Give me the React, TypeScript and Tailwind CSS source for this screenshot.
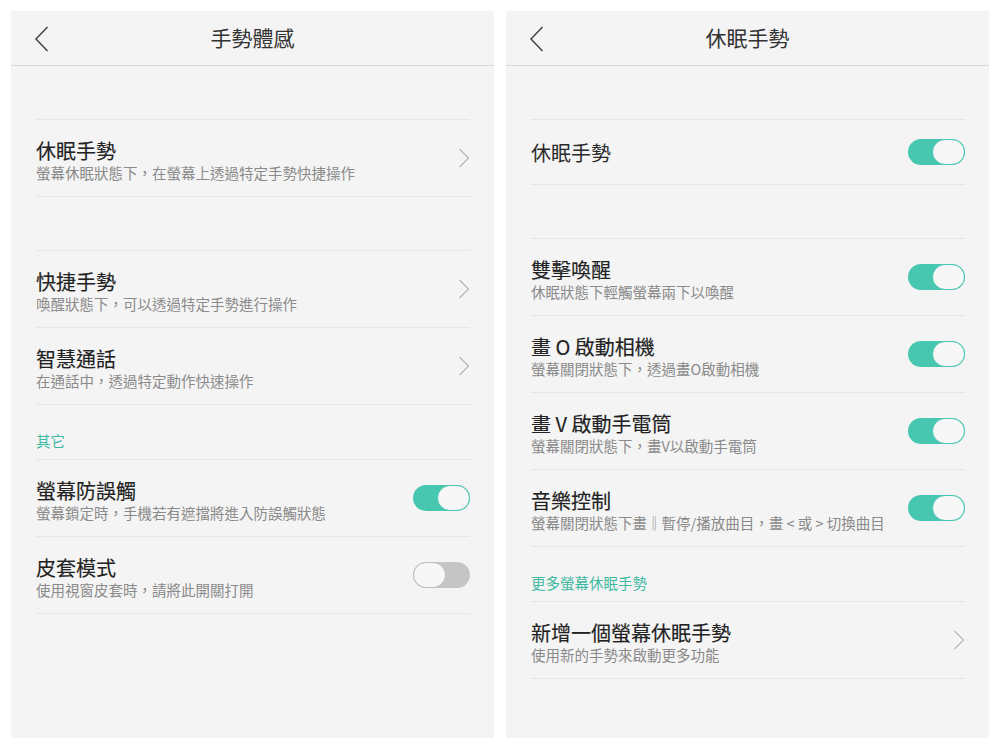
import { ReactNode } from 'react'

type Item = {
  title: string
  sub?: string
  control: 'chevron' | 'on' | 'off'
}

const Chevron = () => (
  <svg width="12" height="20" viewBox="0 0 12 20" fill="none" className="shrink-0">
    <path d="M1.5 1 L10.5 10 L1.5 19" stroke="#b8b8b8" strokeWidth="1.3" />
  </svg>
)

const BackArrow = () => (
  <svg width="16" height="26" viewBox="0 0 16 26" fill="none">
    <path d="M13.5 1 L2 13 L13.5 25" stroke="#444444" strokeWidth="1.5" />
  </svg>
)

const Toggle = ({ on }: { on: boolean }) =>
  on ? (
    <div className="flex h-[26px] w-[57px] shrink-0 justify-end rounded-full bg-[#48c7b0]">
      <div className="h-[26px] w-[33px] rounded-full border-[1.5px] border-[#48c7b0] bg-[#f7f7f7]" />
    </div>
  ) : (
    <div className="flex h-[26px] w-[57px] shrink-0 justify-start rounded-full bg-[#c5c5c5]">
      <div className="h-[26px] w-[33px] rounded-full border-[1.5px] border-[#bdbdbd] bg-[#f7f7f7]" />
    </div>
  )

const Row = ({ item }: { item: Item }) => (
  <div className="flex h-[77px] items-center justify-between border-b border-[#e6e6e6]">
    <div className="flex flex-col pt-[6px]">
      <span className="text-[20px] leading-[24px] text-[#222222] [-webkit-text-stroke:0.15px_#222222]">{item.title}</span>
      {item.sub && <span className="text-[14.5px] leading-[20px] text-[#8a8a8a]">{item.sub}</span>}
    </div>
    {item.control === 'chevron' ? <Chevron /> : <Toggle on={item.control === 'on'} />}
  </div>
)

const Group = ({ items }: { items: Item[] }) => (
  <div className="border-t border-[#e6e6e6]">
    {items.map((item) => (
      <Row key={item.title} item={item} />
    ))}
  </div>
)

const SectionLabel = ({ children }: { children: ReactNode }) => (
  <div className="flex h-[54px] items-end pb-[8px] text-[14.5px] leading-[20px] text-[#3fb9a2]">{children}</div>
)

const Spacer = () => <div className="h-[53px]" />

const Panel = ({ title, children }: { title: string; children: ReactNode }) => (
  <div className="flex h-[727px] w-[483px] flex-col bg-[#f4f4f4]">
    <div className="grid h-[55px] grid-cols-[80px_1fr_80px] items-center border-b border-[#d9d9d9]">
      <div className="pl-[23px] pt-[1px]">
        <BackArrow />
      </div>
      <div className="text-center text-[21px] text-[#333333]">{title}</div>
      <div />
    </div>
    <div className="pl-[25px] pr-[24px]">{children}</div>
  </div>
)

const App = () => {
  return (
    <div className="flex h-[750px] w-[1000px] gap-[12px] bg-white pl-[11px] pt-[11px] font-['Noto_Sans_CJK_TC','Noto_Sans',sans-serif]">
      <Panel title="手勢體感">
        <Spacer />
        <Group items={[{ title: '休眠手勢', sub: '螢幕休眠狀態下，在螢幕上透過特定手勢快捷操作', control: 'chevron' }]} />
        <Spacer />
        <Group
          items={[
            { title: '快捷手勢', sub: '喚醒狀態下，可以透過特定手勢進行操作', control: 'chevron' },
            { title: '智慧通話', sub: '在通話中，透過特定動作快速操作', control: 'chevron' },
          ]}
        />
        <div className="border-b border-[#e6e6e6]">
          <SectionLabel>其它</SectionLabel>
        </div>
        <Row item={{ title: '螢幕防誤觸', sub: '螢幕鎖定時，手機若有遮擋將進入防誤觸狀態', control: 'on' }} />
        <Row item={{ title: '皮套模式', sub: '使用視窗皮套時，請將此開關打開', control: 'off' }} />
      </Panel>

      <Panel title="休眠手勢">
        <Spacer />
        <div className="flex h-[66px] items-center justify-between border-y border-[#e6e6e6]">
          <span className="pt-[2px] text-[20px] text-[#2a2a2a]">休眠手勢</span>
          <Toggle on />
        </div>
        <Spacer />
        <Group
          items={[
            { title: '雙擊喚醒', sub: '休眠狀態下輕觸螢幕兩下以喚醒', control: 'on' },
            { title: '畫 O 啟動相機', sub: '螢幕關閉狀態下，透過畫O啟動相機', control: 'on' },
            { title: '畫 V 啟動手電筒', sub: '螢幕關閉狀態下，畫V以啟動手電筒', control: 'on' },
            { title: '音樂控制', sub: '螢幕關閉狀態下畫‖暫停/播放曲目，畫 < 或 > 切換曲目', control: 'on' },
          ]}
        />
        <div className="border-b border-[#e6e6e6]">
          <SectionLabel>更多螢幕休眠手勢</SectionLabel>
        </div>
        <Row item={{ title: '新增一個螢幕休眠手勢', sub: '使用新的手勢來啟動更多功能', control: 'chevron' }} />
      </Panel>
    </div>
  )
}

export default App
